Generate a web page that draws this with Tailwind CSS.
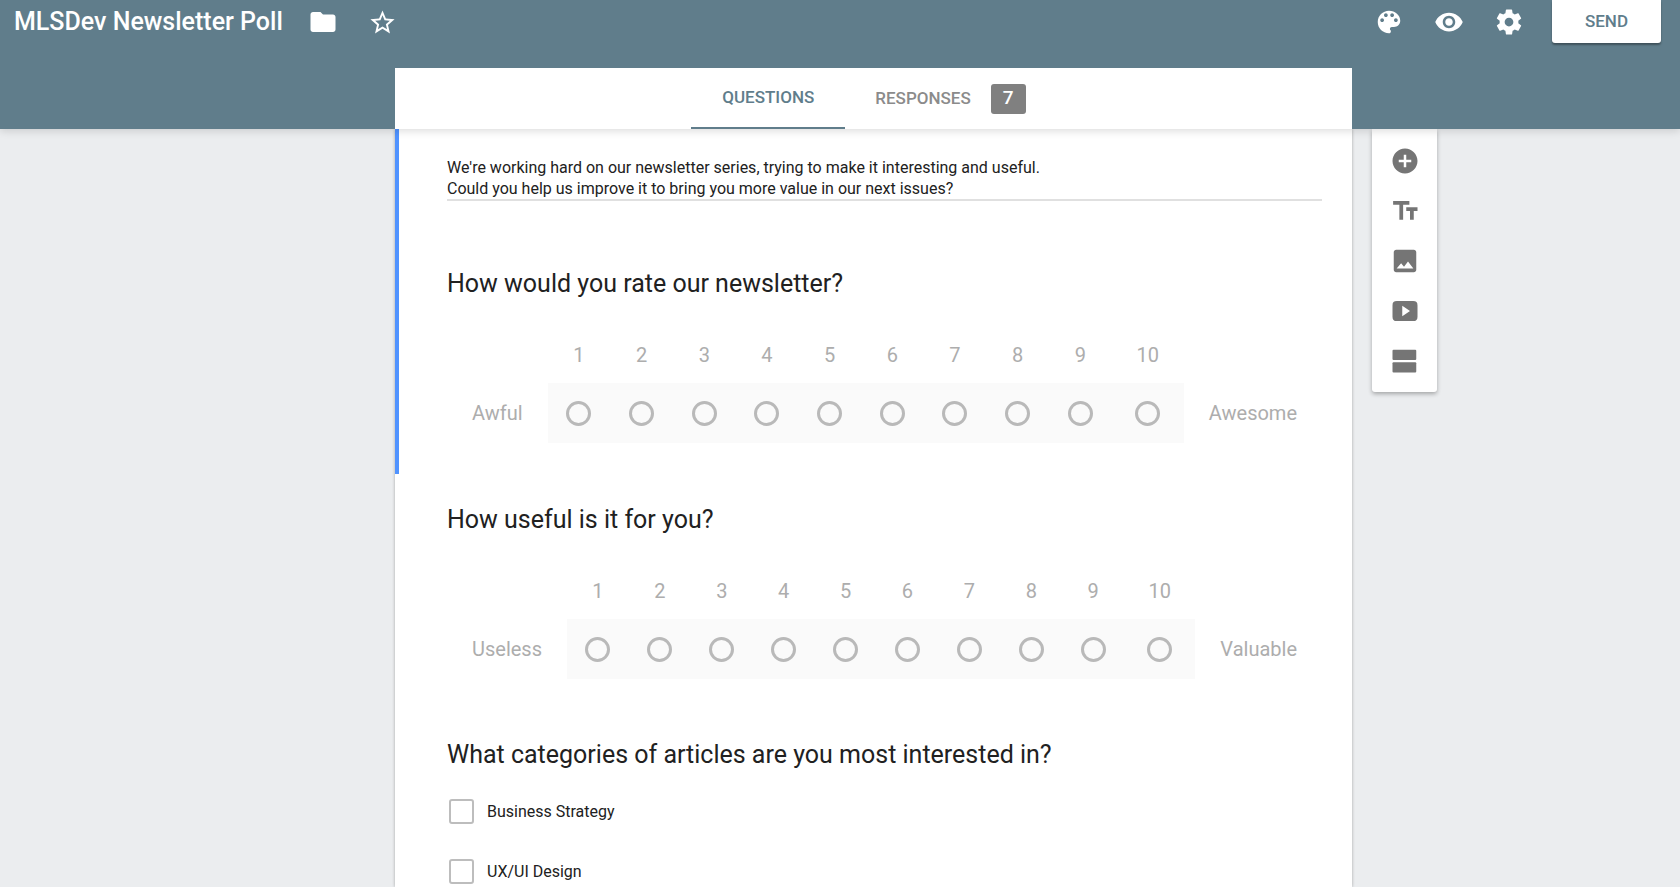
<!DOCTYPE html>
<html lang="en">
<head>
<meta charset="utf-8">
<meta name="viewport" content="width=device-width, initial-scale=1">
<title>MLSDev Newsletter Poll</title>
<script src="https://cdn.jsdelivr.net/npm/@tailwindcss/browser@4"></script>
</head>
<body class="flex min-h-screen flex-col bg-[#ebedef] font-[Roboto,'Liberation_Sans',sans-serif] text-[#212121]">

<header class="relative z-10 bg-[#607d8b] shadow-[0_2px_8px_rgba(0,0,0,0.14)]">
  <div class="flex h-[68px] items-start justify-between pr-[19px] pl-[14px] text-white">
    <div class="flex h-11 items-center">
      <h1 class="text-[25px] leading-8 font-medium">MLSDev Newsletter Poll</h1>
      <button type="button" aria-label="Move to folder" class="ml-[25px]">
        <svg class="size-[30px]" viewBox="0 0 24 24" fill="currentColor"><path d="M10 4H4c-1.100 0-2 .9-2 2v12c0 1.100.9 2 2 2h16c1.100 0 2-.9 2-2V8c0-1.100-.9-2-2-2h-8l-2-2z"/></svg>
      </button>
      <button type="button" aria-label="Star" class="ml-[30px]">
        <svg class="size-[29px]" viewBox="0 0 24 24" fill="currentColor"><path d="M22 9.240l-7.190-.62L12 2 9.190 8.630 2 9.240l5.460 4.730L5.820 21 12 17.270 18.180 21l-1.630-7.030L22 9.240zM12 15.400l-3.760 2.270 1-4.280-3.320-2.880 4.380-.38L12 6.100l1.710 4.040 4.380.38-3.320 2.880 1 4.280L12 15.400z"/></svg>
      </button>
    </div>
    <div class="flex items-start">
      <div class="mr-7 flex h-[43px] items-center gap-[30px]">
        <button type="button" aria-label="Customize theme">
          <svg class="size-[30px]" viewBox="0 0 24 24" fill="currentColor"><path d="M12 3c-4.970 0-9 4.030-9 9s4.030 9 9 9c.83 0 1.500-.67 1.500-1.500 0-.39-.15-.74-.39-1.010-.23-.26-.38-.61-.38-.99 0-.83.67-1.500 1.500-1.500H16c2.760 0 5-2.240 5-5 0-4.420-4.030-8-9-8zm-5.500 9c-.83 0-1.500-.67-1.500-1.500S5.670 9 6.500 9 8 9.670 8 10.500 7.330 12 6.500 12zm3-4C8.670 8 8 7.330 8 6.500S8.670 5 9.500 5s1.500.67 1.500 1.500S10.330 8 9.500 8zm5 0c-.83 0-1.500-.67-1.500-1.500S13.670 5 14.500 5s1.500.67 1.500 1.500S15.330 8 14.500 8zm3 4c-.83 0-1.500-.67-1.500-1.500S16.670 9 17.500 9s1.500.67 1.500 1.500-.67 1.500-1.500 1.500z"/></svg>
        </button>
        <button type="button" aria-label="Preview">
          <svg class="size-[30px]" viewBox="0 0 24 24" fill="currentColor"><path d="M12 4.500C7 4.500 2.730 7.610 1 12c1.730 4.390 6 7.500 11 7.500s9.270-3.110 11-7.500c-1.730-4.390-6-7.500-11-7.500zM12 17c-2.760 0-5-2.240-5-5s2.240-5 5-5 5 2.240 5 5-2.240 5-5 5zm0-8c-1.660 0-3 1.340-3 3s1.340 3 3 3 3-1.340 3-3-1.340-3-3-3z"/></svg>
        </button>
        <button type="button" aria-label="Settings">
          <svg class="size-[30px]" viewBox="0 0 24 24" fill="currentColor"><path d="M19.430 12.980c.04-.32.07-.64.07-.98s-.03-.66-.07-.98l2.110-1.650c.19-.15.24-.42.12-.64l-2-3.460c-.12-.22-.39-.3-.61-.22l-2.490 1c-.52-.4-1.080-.73-1.690-.98l-.38-2.650C14.460 2.180 14.250 2 14 2h-4c-.25 0-.46.18-.49.42l-.38 2.650c-.61.25-1.170.59-1.690.98l-2.490-1c-.23-.09-.49 0-.61.22l-2 3.460c-.13.22-.07.49.12.64l2.110 1.650c-.04.32-.07.65-.07.98s.03.66.07.98l-2.110 1.650c-.19.15-.24.42-.12.64l2 3.460c.12.22.39.3.61.22l2.490-1c.52.4 1.080.73 1.690.98l.38 2.650c.03.24.24.42.49.42h4c.25 0 .46-.18.49-.42l.38-2.650c.61-.25 1.170-.59 1.690-.98l2.490 1c.23.09.49 0 .61-.22l2-3.460c.12-.22.07-.49-.12-.64l-2.110-1.650zM12 15.500c-1.930 0-3.500-1.570-3.500-3.500s1.570-3.500 3.500-3.500 3.500 1.570 3.500 3.500-1.570 3.500-3.500 3.500z"/></svg>
        </button>
      </div>
      <button type="button" class="h-[43px] w-[109px] rounded-b-[3px] bg-white text-[17px] font-medium text-[#607d8b] shadow-[0_2px_2px_rgba(0,0,0,0.35)]">SEND</button>
    </div>
  </div>
  <div class="grid grid-cols-[395fr_957fr_328fr]">
    <nav class="col-start-2 flex h-[61px] justify-center bg-white pr-[30px] text-[17px] font-medium">
      <a href="#questions" class="flex w-[154px] items-center justify-center border-b-2 border-[#607d8b] text-[#607d8b]">QUESTIONS</a>
      <a href="#responses" class="flex items-center gap-5 pl-[30px] text-[#8b8b8b]">RESPONSES
        <span class="flex h-[30px] w-[35px] items-center justify-center rounded-[3px] bg-[#808080] text-[19px] text-white">7</span>
      </a>
    </nav>
  </div>
</header>

<main id="questions" class="grid flex-1 grid-cols-[395fr_957fr_328fr]">
  <form class="col-start-2 bg-white shadow-[0_0_3px_rgba(0,0,0,0.3)]">
    <div class="h-[345px] border-l-4 border-[#5093ff] pt-7 pr-[30px] pl-12">
      <textarea aria-label="Form description" rows="2" class="block w-full resize-none overflow-hidden border-b-2 border-[#e0e0e0] text-[16px] leading-[21px] outline-none">We're working hard on our newsletter series, trying to make it interesting and useful.
Could you help us improve it to bring you more value in our next issues?</textarea>
      <fieldset class="mt-[67px]">
        <legend class="text-[25px] leading-8">How would you rate our newsletter?</legend>
        <div class="mt-[43px] flex items-end px-[25px] text-[20px] leading-6 text-[#adadad]">
          <span class="flex h-[60px] items-center pr-[25px]">Awful</span>
          <div data-scale="rate" class="grid flex-1 grid-cols-[repeat(9,1fr)_1.15fr]"></div>
          <span class="flex h-[60px] items-center pl-[25px]">Awesome</span>
        </div>
      </fieldset>
    </div>
    <fieldset class="mt-[30px] pr-[30px] pl-[52px]">
      <legend class="text-[25px] leading-8">How useful is it for you?</legend>
      <div class="mt-[43px] flex items-end px-[25px] text-[20px] leading-6 text-[#adadad]">
        <span class="flex h-[60px] items-center pr-[25px]">Useless</span>
        <div data-scale="useful" class="grid flex-1 grid-cols-[repeat(9,1fr)_1.15fr]"></div>
        <span class="flex h-[60px] items-center pl-[25px]">Valuable</span>
      </div>
    </fieldset>
    <fieldset class="mt-[60px] pr-[30px] pl-[52px]">
      <legend class="text-[25px] leading-8">What categories of articles are you most interested in?</legend>
      <div class="mt-[28px] flex flex-col gap-[35px] pl-[2px] text-[16px] leading-[25px]">
        <label class="flex items-center gap-[13px]"><input type="checkbox" class="size-[25px] appearance-none rounded-[3px] border-2 border-[#bdbdbd] checked:bg-[#607d8b]">Business Strategy</label>
        <label class="flex items-center gap-[13px]"><input type="checkbox" class="size-[25px] appearance-none rounded-[3px] border-2 border-[#bdbdbd] checked:bg-[#607d8b]">UX/UI Design</label>
      </div>
    </fieldset>
  </form>

  <aside aria-label="Add item" class="ml-5 flex w-[65px] flex-col items-center gap-5 self-start rounded-b-[3px] bg-white pt-[17px] pb-4 text-[#757575] shadow-[0_2px_4px_rgba(0,0,0,0.3)]">
    <button type="button" aria-label="Add question"><svg class="size-[30px]" viewBox="0 0 24 24" fill="currentColor"><path d="M12 2C6.480 2 2 6.480 2 12s4.480 10 10 10 10-4.480 10-10S17.520 2 12 2zm5 11h-4v4h-2v-4H7v-2h4V7h2v4h4v2z"/></svg></button>
    <button type="button" aria-label="Add title and description"><svg class="size-[30px]" viewBox="0 0 24 24" fill="currentColor"><path d="M2.500 4v3h5v12h3V7h5V4h-13zm19.500 5h-9v3h3v7h3v-7h3V9z"/></svg></button>
    <button type="button" aria-label="Add image"><svg class="size-[30px]" viewBox="0 0 24 24" fill="currentColor"><path d="M5 3h14c1.100 0 2 .9 2 2v14c0 1.100-.9 2-2 2H5c-1.100 0-2-.9-2-2V5c0-1.100.9-2 2-2zM5.300 18h13.400l-4.300-5.700-3.200 4.200-2.300-2.700z"/></svg></button>
    <button type="button" aria-label="Add video"><svg class="size-[30px]" viewBox="0 0 24 24" fill="currentColor"><path d="M5.500 4h13C21 4 22 5 22 7.500v9c0 2.500-1 3.500-3.500 3.500h-13C3 20 2 19 2 16.500v-9C2 5 3 4 5.500 4zM9.800 7.800v8.400L16 12z"/></svg></button>
    <button type="button" aria-label="Add section"><svg class="size-[30px]" viewBox="0 0 24 24" fill="currentColor"><rect x="2" y="3" width="19" height="8.200" rx=".8"/><rect x="2" y="13" width="19" height="8.200" rx=".8"/></svg></button>
  </aside>
</main>

<template id="scale-option">
  <label class="flex flex-col text-center">
    <span class="pb-4"></span>
    <span class="flex h-[60px] items-center justify-center bg-[#fafafa]">
      <input type="radio" class="size-[25px] appearance-none rounded-full border-3 border-[#b9b9b9] checked:bg-[#607d8b]">
    </span>
  </label>
</template>
<script>
  const option = document.getElementById('scale-option');
  document.querySelectorAll('[data-scale]').forEach(scale => {
    for (let value = 1; value <= 10; value++) {
      const item = option.content.cloneNode(true);
      const radio = item.querySelector('input');
      item.querySelector('span').textContent = value;
      radio.name = scale.dataset.scale;
      radio.value = value;
      scale.append(item);
    }
  });
</script>
</body>
</html>
